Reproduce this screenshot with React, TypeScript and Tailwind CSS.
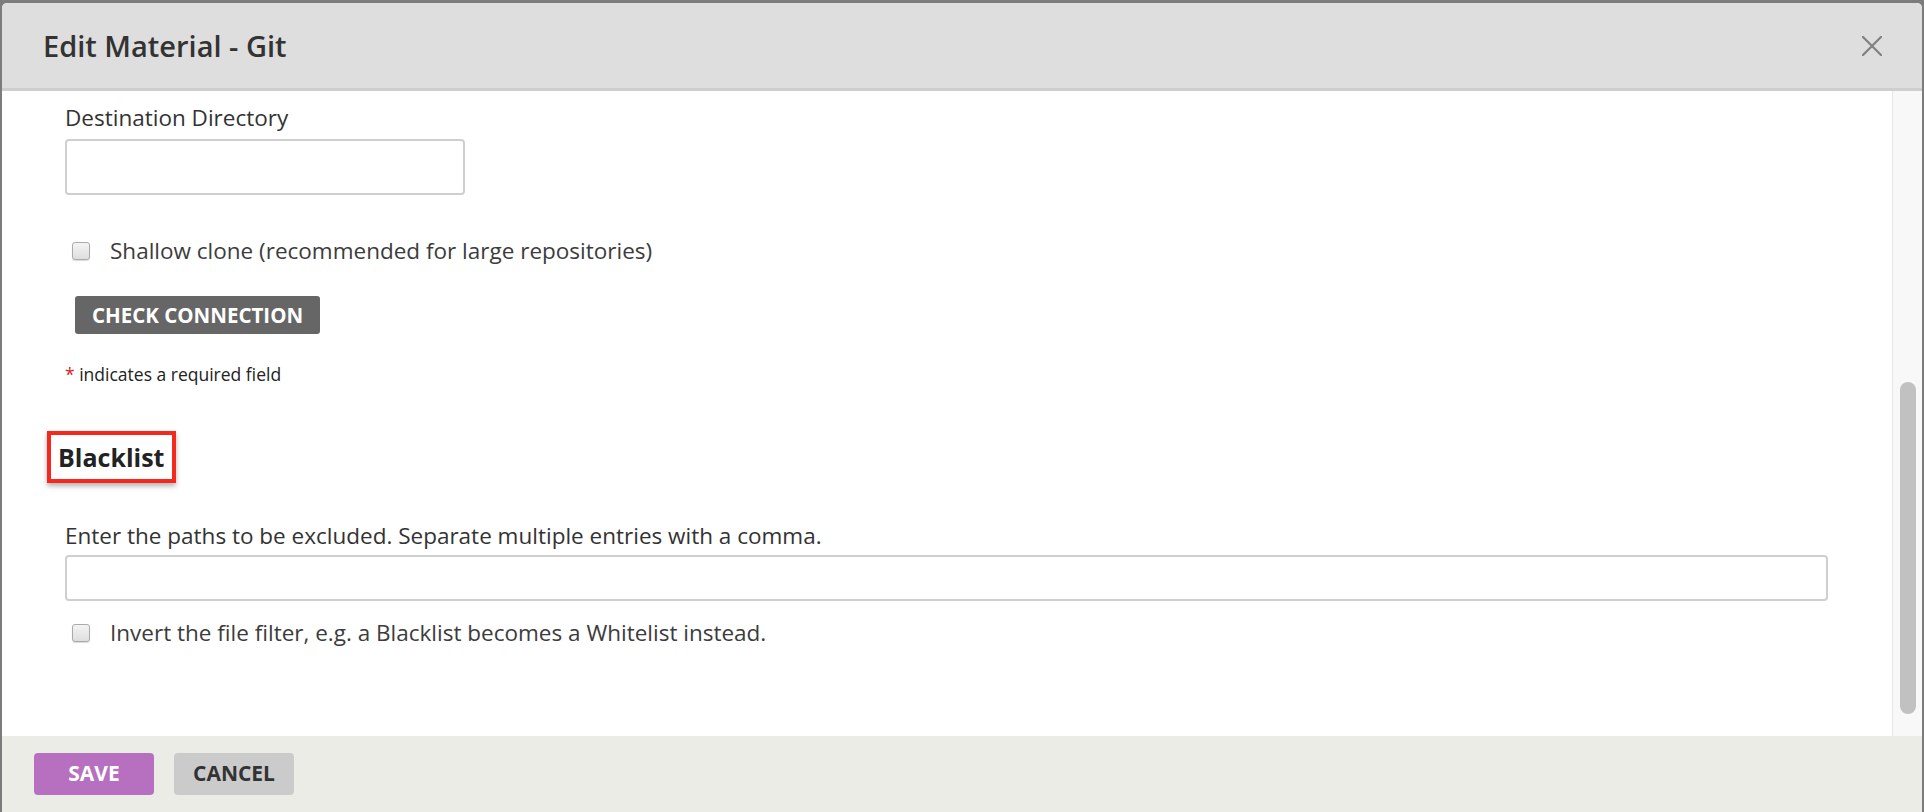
export default function App() {
  return (
    <div className="h-[812px] w-full bg-[#7c7c7c] pt-[3px] px-[2px] flex flex-col font-['Open_Sans',sans-serif] text-[#333]">
      <div className="flex-1 flex flex-col bg-white rounded-t-[5px] overflow-hidden">
        {/* header */}
        <header className="h-[88px] shrink-0 bg-[#dedede] border-b-[3px] border-[#cecece] flex items-center justify-between pl-[41px] pr-[40px]">
          <h1 className="text-[29px] font-semibold text-[#333] leading-none">Edit Material - Git</h1>
          <svg width="20" height="20" viewBox="0 0 20 20" className="text-[#808080]">
            <path d="M1 1L19 19M19 1L1 19" stroke="currentColor" strokeWidth="2.2" strokeLinecap="round" />
          </svg>
        </header>

        {/* body */}
        <div className="flex-1 flex min-h-0">
          <div className="flex-1 flex flex-col items-start pl-[63px] pr-[64px]">
            <label className="mt-[12px] text-[22.5px] leading-[30px]">Destination Directory</label>
            <div className="mt-[6px] h-[56px] w-[400px] border-2 border-[#cfcfcf] rounded-[4px] bg-white" />

            <div className="mt-[41px] flex items-center pl-[7px] h-[30px]">
              <Checkbox />
              <span className="ml-[20px] text-[22.5px] leading-[30px] text-[#3c3c3c]">Shallow clone (recommended for large repositories)</span>
            </div>

            <button className="mt-[30px] ml-[10px] h-[38px] px-[17px] bg-[#666] text-white font-bold text-[20.5px] leading-none rounded-[3px]">
              CHECK CONNECTION
            </button>

            <p className="mt-[29px] text-[17.5px] leading-[22px] text-[#222]">
              <span className="text-[#e0201b]">*</span> indicates a required field
            </p>

            <div className="mt-[46px] -ml-[18px] w-[129px] h-[52px] border-[4px] border-[#f4281c] bg-white flex items-center px-[7px] shadow-[0_3px_5px_rgba(0,0,0,0.3)]">
              <h2 className="text-[25px] font-bold text-[#222] leading-none whitespace-nowrap">Blacklist</h2>
            </div>

            <label className="mt-[38px] text-[22.5px] leading-[30px]">Enter the paths to be excluded. Separate multiple entries with a comma.</label>
            <div className="mt-[4px] h-[46px] w-full border-2 border-[#cfcfcf] rounded-[4px] bg-white" />

            <div className="mt-[17px] flex items-center pl-[7px] h-[30px]">
              <Checkbox />
              <span className="ml-[20px] text-[22.5px] leading-[30px] text-[#3c3c3c]">Invert the file filter, e.g. a Blacklist becomes a Whitelist instead.</span>
            </div>
          </div>

          {/* scrollbar */}
          <div className="w-[30px] shrink-0 bg-[#f8f8f8] border-l border-[#e6e6e6]">
            <div className="mt-[291px] ml-[7px] w-[16px] h-[332px] rounded-full bg-[#c1c1c1]" />
          </div>
        </div>

        {/* footer */}
        <footer className="h-[76px] shrink-0 bg-[#ecece7] flex items-center gap-[20px] pl-[32px]">
          <button className="h-[42px] w-[120px] rounded-[4px] bg-[#b670bf] text-white font-bold text-[21px]">SAVE</button>
          <button className="h-[42px] w-[120px] rounded-[4px] bg-[#cbcbcb] text-[#333] font-bold text-[21px]">CANCEL</button>
        </footer>
      </div>
    </div>
  );
}

function Checkbox() {
  return (
    <div className="w-[18px] h-[18px] rounded-[3px] border border-[#aaa] bg-gradient-to-b from-[#f4f4f4] to-[#dedede] shadow-[0_1px_1px_rgba(0,0,0,0.15)]" />
  );
}
